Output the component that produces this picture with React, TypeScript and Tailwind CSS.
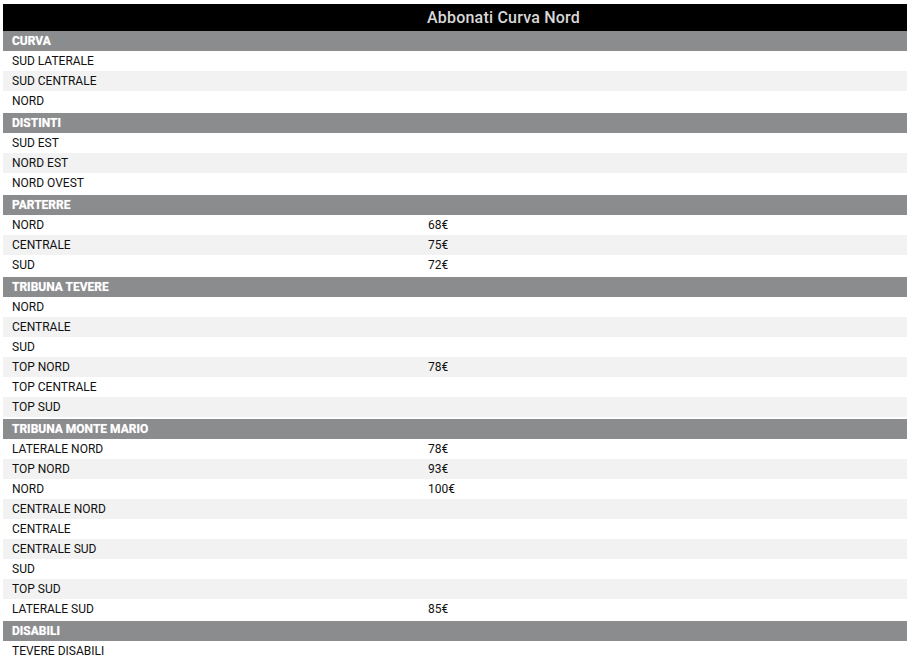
type Row = { name: string; price?: string };
type Section = { title: string; rows: Row[] };

const sections: Section[] = [
  {
    title: "CURVA",
    rows: [{ name: "SUD LATERALE" }, { name: "SUD CENTRALE" }, { name: "NORD" }],
  },
  {
    title: "DISTINTI",
    rows: [{ name: "SUD EST" }, { name: "NORD EST" }, { name: "NORD OVEST" }],
  },
  {
    title: "PARTERRE",
    rows: [
      { name: "NORD", price: "68€" },
      { name: "CENTRALE", price: "75€" },
      { name: "SUD", price: "72€" },
    ],
  },
  {
    title: "TRIBUNA TEVERE",
    rows: [
      { name: "NORD" },
      { name: "CENTRALE" },
      { name: "SUD" },
      { name: "TOP NORD", price: "78€" },
      { name: "TOP CENTRALE" },
      { name: "TOP SUD" },
    ],
  },
  {
    title: "TRIBUNA MONTE MARIO",
    rows: [
      { name: "LATERALE NORD", price: "78€" },
      { name: "TOP NORD", price: "93€" },
      { name: "NORD", price: "100€" },
      { name: "CENTRALE NORD" },
      { name: "CENTRALE" },
      { name: "CENTRALE SUD" },
      { name: "SUD" },
      { name: "TOP SUD" },
      { name: "LATERALE SUD", price: "85€" },
    ],
  },
  {
    title: "DISABILI",
    rows: [{ name: "TEVERE DISABILI" }],
  },
];

export default function App() {
  return (
    <div className="min-h-screen bg-white pt-[4px] pl-[3px] font-['Roboto','Liberation_Sans',sans-serif]">
      <div className="w-[904px]">
        {/* Header */}
        <div className="flex h-[27px] items-center bg-black">
          <div className="w-[424px]" />
          <div className="text-[16px] font-medium tracking-[0.2px] text-[#d8d8d8]">Abbonati Curva Nord</div>
        </div>

        {sections.map((s, si) => (
          <div key={s.title} className={si < sections.length - 1 ? "mb-[2px]" : ""}>
            <div className="flex h-[20px] items-center bg-[#8a8c8e] pl-[9px] text-[12px] font-bold text-white [text-shadow:0_0_1px_rgba(255,255,255,0.6)]">
              {s.title}
            </div>
            {s.rows.map((r, i) => (
              <div
                key={s.title + r.name}
                className={`flex h-[20px] items-center text-[12px] text-[#111] ${i % 2 === 1 ? "bg-[#f2f2f2]" : "bg-white"}`}
              >
                <div className="w-[425px] pl-[9px]">{r.name}</div>
                <div>{r.price ?? ""}</div>
              </div>
            ))}
          </div>
        ))}
      </div>
    </div>
  );
}
